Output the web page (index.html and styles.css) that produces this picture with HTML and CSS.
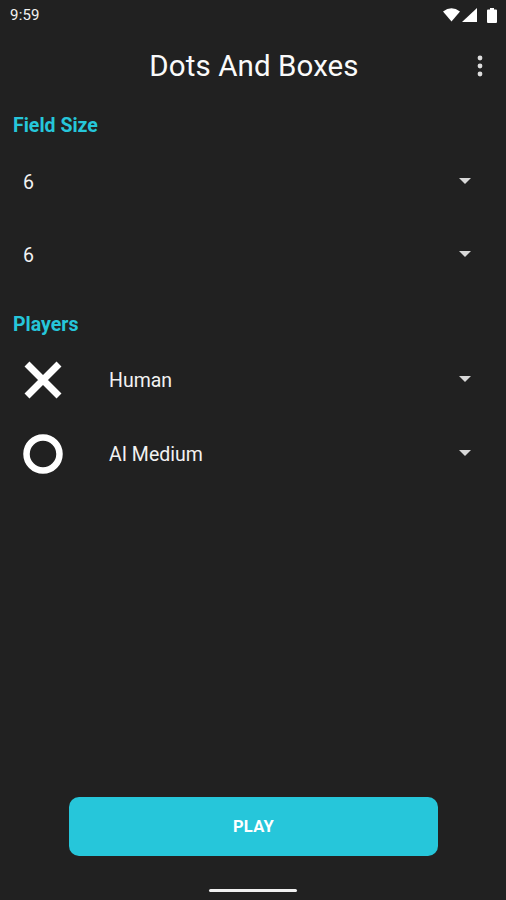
FILE: index.html
```html
<!DOCTYPE html>
<html>
<head>
<meta charset="utf-8">
<link rel="stylesheet" href="styles.css">
</head>
<body>
<div class="screen">
  <div class="status">
    <span class="time">9:59</span>
    <div class="sicons">
      <svg width="17" height="14" viewBox="0 0 17 14"><path d="M0 3.5 Q8.5 -3 17 3.5 L8.5 13.5 Z" fill="#fff"/></svg>
      <svg width="15" height="14" viewBox="0 0 15 14"><path d="M15 0 L15 14 L0 14 Z" fill="#fff"/></svg>
      <svg width="10" height="15" viewBox="0 0 10 15"><path d="M3 0 H7 V1.5 H9 Q10 1.5 10 2.5 V14 Q10 15 9 15 H1 Q0 15 0 14 V2.5 Q0 1.5 1 1.5 H3 Z" fill="#fff"/></svg>
    </div>
  </div>
  <div class="appbar">
    <h1 class="title">Dots And Boxes</h1>
    <svg class="more" width="6" height="22" viewBox="0 0 6 22"><circle cx="3" cy="3" r="2.4" fill="#ddd"/><circle cx="3" cy="11" r="2.4" fill="#ddd"/><circle cx="3" cy="19" r="2.4" fill="#ddd"/></svg>
  </div>
  <div class="content">
    <h2 class="section">Field Size</h2>
    <div class="row plain"><span class="val">6</span><span class="arrow"></span></div>
    <div class="row plain"><span class="val">6</span><span class="arrow"></span></div>
    <h2 class="section players">Players</h2>
    <div class="row player">
      <div class="picon">
        <svg width="40" height="40" viewBox="0 0 40 40"><path d="M4 4 L36 36 M36 4 L4 36" stroke="#fff" stroke-width="7" stroke-linecap="butt"/></svg>
      </div>
      <span class="val">Human</span><span class="arrow"></span>
    </div>
    <div class="row player">
      <div class="picon">
        <svg width="40" height="40" viewBox="0 0 40 40"><circle cx="20" cy="20" r="16.5" fill="none" stroke="#fff" stroke-width="6.5"/></svg>
      </div>
      <span class="val">AI Medium</span><span class="arrow"></span>
    </div>
  </div>
  <div class="bottom">
    <button class="play">PLAY</button>
    <div class="home"></div>
  </div>
</div>
</body>
</html>
```
FILE: styles.css
```css
* { box-sizing: border-box; }
html, body { margin: 0; padding: 0; }
body {
  background: #212121;
  font-family: Roboto, "Noto Sans", sans-serif;
  color: #fff;
  width: 506px;
  height: 900px;
  overflow: hidden;
}
.screen {
  height: 900px;
  display: flex;
  flex-direction: column;
}
.status {
  height: 32px;
  display: flex;
  align-items: center;
  justify-content: space-between;
  padding: 0 9px 2px 10px;
}
.time {
  font-size: 15px;
  color: #f2f2f2;
  letter-spacing: 0.2px;
}
.sicons {
  display: flex;
  align-items: center;
  gap: 2px;
}
.sicons svg:last-child { margin-left: 8px; }
.appbar {
  height: 68px;
  display: flex;
  align-items: center;
  justify-content: center;
  position: relative;
}
.title {
  margin: 0 0 0 2px;
  font-weight: 400;
  font-size: 29.5px;
  color: #fafafa;
  letter-spacing: 0.1px;
}
.more {
  position: absolute;
  right: 23px;
  top: 23px;
}
.content {
  flex: 1;
  padding: 0 0 0 13px;
}
.section {
  margin: 0;
  font-size: 19.5px;
  font-weight: 700;
  color: #26c6da;
  height: 46px;
  padding-top: 15px;
  line-height: 22px;
}
.section.players {
  padding-top: 22px;
  height: 51px;
}
.row {
  display: flex;
  align-items: center;
  height: 73px;
  padding-right: 35px;
}
.row.plain { padding-left: 10px; }
.val {
  flex: 1;
  font-size: 19.5px;
  color: #f2f2f2;
}
.arrow {
  width: 0;
  height: 0;
  border-left: 6px solid transparent;
  border-right: 6px solid transparent;
  border-top: 6px solid #d8d8d8;
  margin-bottom: 3px;
}
.row.player { height: 74px; }
.picon {
  width: 96px;
  padding-left: 10px;
  display: flex;
  align-items: center;
}
.bottom {
  display: flex;
  flex-direction: column;
  align-items: center;
}
.play {
  width: 369px;
  height: 59px;
  border: none;
  border-radius: 10px;
  background: #26c6da;
  color: #fff;
  font-family: Roboto, sans-serif;
  font-size: 16.5px;
  font-weight: 700;
  letter-spacing: 0.3px;
  margin-bottom: 33px;
  margin-left: 1px;
}
.home {
  width: 88px;
  height: 3px;
  border-radius: 2px;
  background: #f0f0f0;
  margin-bottom: 8px;
}
```
